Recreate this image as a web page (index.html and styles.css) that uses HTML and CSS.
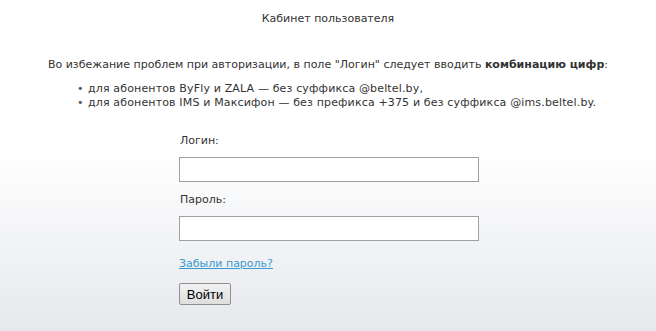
FILE: index.html
```html
<!DOCTYPE html>
<html lang="ru">
<head>
    <meta charset="UTF-8">
    <title>Кабинет пользователя</title>
    <link rel="stylesheet" href="styles.css">
</head>
<body>
    <div class="header">Кабинет пользователя</div>

    <div class="notice">
        <p class="notice-text">Во избежание проблем при авторизации, в поле "Логин" следует вводить <b>комбинацию цифр</b>:</p>
        <ul class="notice-list">
            <li>для абонентов ByFly и ZALA — без суффикса @beltel.by,</li>
            <li>для абонентов IMS и Максифон — без префикса +375 и без суффикса @ims.beltel.by.</li>
        </ul>
    </div>

    <form class="login-form" onsubmit="return false">
        <label class="field-label" for="login">Логин:</label>
        <input class="field-input" type="text" id="login">
        <label class="field-label" for="password">Пароль:</label>
        <input class="field-input" type="password" id="password">
        <a class="forgot" href="#">Забыли пароль?</a>
        <div><button class="submit-btn" type="submit">Войти</button></div>
    </form>
</body>
</html>
```

FILE: styles.css
```css
html {
    min-height: 100%;
    background: linear-gradient(to bottom, #ffffff 0, #ffffff 150px, #e6e8ec 331px);
}
body {
    font-family: "DejaVu Sans", Verdana, sans-serif;
    font-size: 11px;
    color: #333;
    margin: 0;
    padding: 0;
}
.header {
    text-align: center;
    padding-top: 12px;
    line-height: 14px;
}
.notice {
    margin-top: 32px;
}
.notice-text {
    text-align: center;
    margin: 0;
    line-height: 14px;
}
.notice-list {
    margin: 10px 0 0;
    padding-left: 88px;
    line-height: 14px;
    letter-spacing: 0.15px;
    list-style: none;
}
.notice-list li::before {
    content: "•";
    display: inline-block;
    width: 11px;
    margin-left: -11px;
    color: #555;
}
.login-form {
    width: 300px;
    margin: 24px auto 0;
    padding-left: 2px;
    display: flex;
    flex-direction: column;
    align-items: flex-start;
}
.field-label {
    line-height: 14px;
    margin-left: 1px;
}
.field-input {
    width: 300px;
    height: 25px;
    box-sizing: border-box;
    border: 1px solid #a0a0a0;
    background: #fff;
    margin: 9px 0 11px;
    padding: 2px 4px;
}
.forgot {
    color: #3a9ad0;
    line-height: 14px;
    margin-top: 5px;
}
.submit-btn {
    margin-top: 12px;
    font-family: "Liberation Sans", Arial, sans-serif;
    font-size: 13px;
    color: #000;
    width: 52px;
    height: 22px;
    padding: 0;
    border: 1px solid #8e8f8f;
    border-radius: 2px;
    background: linear-gradient(to bottom, #f2f2f2, #dedede);
}
```
